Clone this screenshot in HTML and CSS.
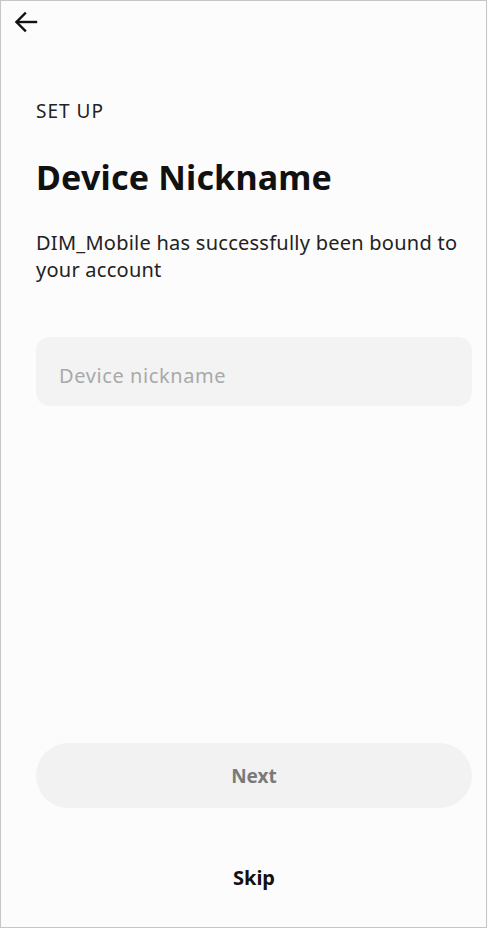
FILE: index.html
```html
<!DOCTYPE html>
<html lang="en">
<head>
  <meta charset="UTF-8">
  <title>Device Nickname</title>
  <link rel="stylesheet" href="styles.css">
</head>
<body>
  <div class="screen">
    <!-- Barre du haut -->
    <div class="topbar">
      <button class="back" aria-label="Back">
        <svg width="24" height="24" viewBox="0 0 24 24" fill="none" stroke="#111" stroke-width="2.4" stroke-linecap="square">
          <path d="M22 12H3"/>
          <path d="M11 3.5L2.5 12L11 20.5"/>
        </svg>
      </button>
    </div>

    <div class="content">
      <p class="step">SET UP</p>
      <h1>Device Nickname</h1>
      <p class="desc">DIM_Mobile has successfully been bound to your account</p>

      <input type="text" class="field" placeholder="Device nickname">
    </div>

    <div class="actions">
      <button class="next" disabled>Next</button>
      <button class="skip">Skip</button>
    </div>
  </div>
</body>
</html>
```

FILE: styles.css
```css
body {
  margin: 0;
  background: #fcfcfc;
  font-family: "Noto Sans", "Open Sans", sans-serif;
}
.screen {
  box-sizing: border-box;
  width: 487px;
  height: 928px;
  border: 1px solid #c6c6c6;
  background: #fcfcfc;
  display: flex;
  flex-direction: column;
}
.topbar {
  padding: 9px 0 0 12px;
  height: 40px;
}
.back {
  background: none;
  border: none;
  padding: 0;
  width: 26px;
  height: 26px;
  cursor: pointer;
}
.content {
  padding: 0 14px 0 35px;
  flex: 1;
}
.step {
  margin: 48px 0 0;
  font-size: 19px;
  letter-spacing: 1px;
  color: #222;
}
h1 {
  margin: 31px 0 0;
  font-size: 34px;
  letter-spacing: 0.2px;
  font-weight: bold;
  color: #111;
  line-height: 1.3;
}
.desc {
  margin: 30px 0 0;
  font-size: 20px;
  letter-spacing: 0.25px;
  line-height: 27px;
  color: #222;
}
.field {
  display: block;
  box-sizing: border-box;
  width: 100%;
  height: 69px;
  margin-top: 54px;
  padding: 7px 23px 0;
  border: none;
  border-radius: 14px;
  background: #f3f3f3;
  font-family: inherit;
  font-size: 20px;
  letter-spacing: 0.6px;
  color: #222;
  outline: none;
}
.field::placeholder {
  color: #a9a9a9;
}
.actions {
  padding: 0 14px 0 35px;
  display: flex;
  flex-direction: column;
}
.next {
  height: 65px;
  border: none;
  border-radius: 33px;
  background: #f2f2f2;
  color: #7a7a7a;
  font-family: inherit;
  font-size: 19px;
  font-weight: bold;
}
.skip {
  margin: 56px 0 36px;
  background: none;
  border: none;
  padding: 0;
  font-family: inherit;
  font-size: 20px;
  font-weight: bold;
  color: #111;
  cursor: pointer;
}
```
